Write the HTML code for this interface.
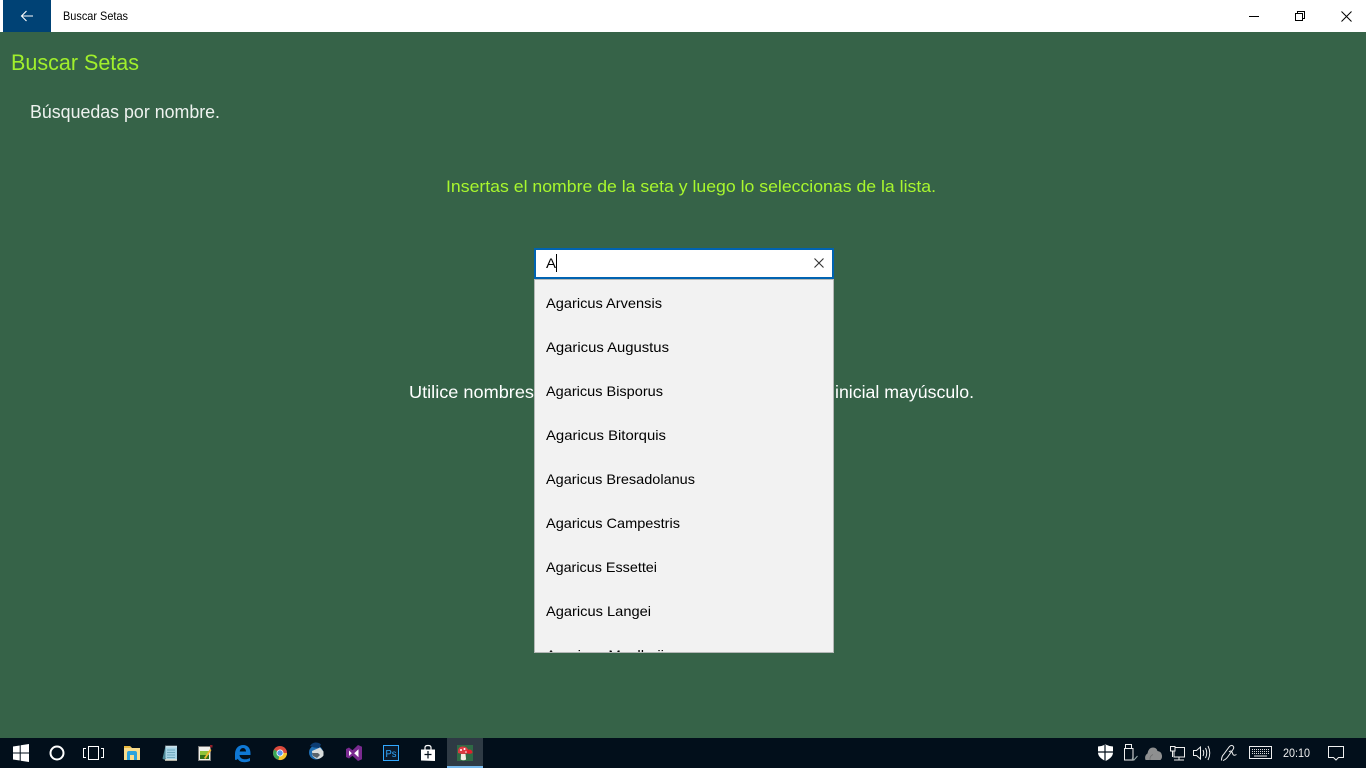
<!DOCTYPE html>
<html lang="es"><head><meta charset="utf-8"><title>Buscar Setas</title>
<style>html,body{margin:0;padding:0;background:#366348;overflow:hidden}svg{display:block}text{font-family:"Liberation Sans",sans-serif}</style></head>
<body>
<svg xmlns="http://www.w3.org/2000/svg" width="1366" height="768" viewBox="0 0 1366 768">
<rect width="1366" height="768" fill="#366348"/>
<!-- title bar -->
<rect width="1366" height="32" fill="#fff"/>
<rect x="3" width="48" height="32" fill="#004275"/>
<path d="M21.500 16H33M26.500 11L21.500 16L26.500 21" fill="none" stroke="#fff" stroke-width="1.100"/>
<text x="63" y="20" font-size="12" textLength="65" lengthAdjust="spacingAndGlyphs" fill="#000">Buscar Setas</text>
<path d="M1249 16.500H1259" stroke="#000" stroke-width="1"/>
<path d="M1295.500 13.500h7v7h-7zM1297.500 13.500v-2h7v7h-2" fill="none" stroke="#000" stroke-width="1"/>
<path d="M1341.500 11.500l10 10M1351.500 11.500l-10 10" stroke="#000" stroke-width="1"/>
<!-- content -->
<text x="11" y="70" font-size="22" textLength="128" lengthAdjust="spacingAndGlyphs" fill="#a0ef2c">Buscar Setas</text>
<text x="30" y="118" font-size="18" textLength="190" lengthAdjust="spacingAndGlyphs" fill="#eef2ef">Búsquedas por nombre.</text>
<text x="446" y="192" font-size="16.500" textLength="490" lengthAdjust="spacingAndGlyphs" fill="#a8f72e">Insertas el nombre de la seta y luego lo seleccionas de la lista.</text>
<text x="409" y="398" font-size="17.500" textLength="125" lengthAdjust="spacingAndGlyphs" fill="#fff">Utilice nombres</text>
<text x="835" y="398" font-size="17.500" textLength="139" lengthAdjust="spacingAndGlyphs" fill="#fff">inicial mayúsculo.</text>
<!-- search box -->
<rect x="535" y="249" width="298" height="29" fill="#fff" stroke="#0063b1" stroke-width="2"/>
<text x="546" y="268" font-size="14" textLength="10" lengthAdjust="spacingAndGlyphs" fill="#000">A</text>
<path d="M556.500 254V272" stroke="#000" stroke-width="1"/>
<path d="M814.500 258.500l9 9M823.500 258.500l-9 9" stroke="#333" stroke-width="1.100"/>
<!-- popup -->
<defs><clipPath id="pop"><rect x="535" y="280" width="298" height="372"/></clipPath></defs>
<rect x="534.500" y="279.500" width="299" height="373" fill="#f2f2f2" stroke="#b4b8b6" stroke-width="1"/>
<g clip-path="url(#pop)" font-size="14" fill="#000">
<text x="546" y="308" textLength="116" lengthAdjust="spacingAndGlyphs">Agaricus Arvensis</text>
<text x="546" y="352" textLength="123" lengthAdjust="spacingAndGlyphs">Agaricus Augustus</text>
<text x="546" y="396" textLength="117" lengthAdjust="spacingAndGlyphs">Agaricus Bisporus</text>
<text x="546" y="440" textLength="120" lengthAdjust="spacingAndGlyphs">Agaricus Bitorquis</text>
<text x="546" y="484" textLength="149" lengthAdjust="spacingAndGlyphs">Agaricus Bresadolanus</text>
<text x="546" y="528" textLength="134" lengthAdjust="spacingAndGlyphs">Agaricus Campestris</text>
<text x="546" y="572" textLength="111" lengthAdjust="spacingAndGlyphs">Agaricus Essettei</text>
<text x="546" y="616" textLength="105" lengthAdjust="spacingAndGlyphs">Agaricus Langei</text>
<text x="546" y="660" textLength="118" lengthAdjust="spacingAndGlyphs">Agaricus Moellerii</text>
</g>
<!-- taskbar -->
<rect y="738" width="1366" height="30" fill="#020f1b"/>
<rect x="447" y="738" width="36" height="30" fill="#2e3a44"/>
<rect x="447" y="766" width="36" height="2" fill="#76b9ed"/>
<!-- windows -->
<path d="M13 746.500l6.700-1v7H13zM20.700 745.300l8.300-1.300v8.500h-8.300zM13 753.500h6.700v7l-6.700-1zM20.700 753.500H29V762l-8.300-1.300z" fill="#fff"/>
<!-- cortana -->
<circle cx="57" cy="753" r="6.500" fill="none" stroke="#fff" stroke-width="2"/>
<!-- task view -->
<path d="M88.500 746.500h10v13h-10zM86 748.500h-2.500v9H86M101 748.500h2.500v9H101" fill="none" stroke="#fff" stroke-width="1"/>
<!-- explorer -->
<path d="M124 746h6l2 2h8v12h-16z" fill="#f9dc8c"/>
<path d="M124 746h6l1 2h-7z" fill="#e8b83f"/>
<path d="M127 757v-4q0-2 2-2h6q2 0 2 2v7h-3v-5h-4v5h-3z" fill="#2ba3dd"/>
<!-- notepad -->
<path d="M165.500 746h11.500v14h-11.500z" fill="#a6d4e6"/>
<path d="M165.500 746l-3 12.500 2 1.500 1-2z" fill="#4c8795"/>
<path d="M165 760h12" stroke="#e8e4d0" stroke-width="1.500"/>
<path d="M166 745.500v2M168 745.500v2M170 745.500v2M172 745.500v2M174 745.500v2M176 745.500v2" stroke="#eee" stroke-width="1"/>
<path d="M167 750h8M167 752.500h8M167 755h8M167 757.500h8" stroke="#6fa9bd" stroke-width="1"/>
<!-- sticky -->
<rect x="198.500" y="746.500" width="12" height="14" fill="#f0f0ec" stroke="#777"/>
<rect x="200" y="751" width="9" height="8" fill="#8fc23a"/>
<path d="M200 755h9v4h-9z" fill="#2f6e19"/>
<path d="M204 758l6-9 1.500 1-6 9z" fill="#f2b632"/>
<rect x="210" y="745" width="2.500" height="2.500" fill="#8f1d28"/>
<!-- edge -->
<path d="M235 754c0-6 4-9 8-9 5 0 7.500 3.500 7.500 8.500V755h-11c.2 3 2.800 4.300 5.500 4.300 2 0 3.800-.6 5-1.300v3c-1.500.8-3.500 1.200-5.500 1.200-3.500 0-5.700-1.400-6.800-3.500-.6 1-1.700 1.500-2.700 1zm4.700-2.500h6.300c0-2-1.200-3.500-3-3.500-1.800 0-3 1.500-3.300 3.500z" fill="#0f78d4"/>
<!-- chrome -->
<circle cx="280" cy="753" r="7" fill="#dd4a3d"/>
<path d="M280 753L274 749.500 273 753a7 7 0 0 0 5.500 6.900z" fill="#3aa757"/>
<path d="M280 753h7a7 7 0 0 1-8.500 6.900z" fill="#f6c52c"/>
<circle cx="280" cy="753" r="3.500" fill="#fff"/>
<circle cx="280" cy="753" r="2.700" fill="#5a95ec"/>
<!-- thunderbird -->
<circle cx="316" cy="752.500" r="7" fill="#1f6fb4"/>
<path d="M310 746a7 7 0 0 1 11-1.500l-2 3.500-5-.5z" fill="#0d3d73"/>
<path d="M312 751l8-3.500 3.500 4v4a7 7 0 0 1-8 3l-3-2.500z" fill="#d8dcdc"/>
<path d="M312 753h6l2 2-3 3-4-2z" fill="#5a636b"/>
<!-- VS -->
<path d="M346 749l3-1.500 3.500 2.700 5.500-5.200 4 1.800v12.400l-4 1.800-5.500-5.200-3.500 2.700-3-1.500z" fill="#7a2a90"/>
<path d="M349 750.500v5.500l2.800-2.800zM358.500 749.200l-4.300 4 4.300 4z" fill="#fff"/>
<!-- Photoshop -->
<rect x="383.500" y="745.500" width="15" height="15" fill="#0a1a2c" stroke="#31a8ff"/>
<text x="385.500" y="757" font-size="10.500" fill="#31a8ff" textLength="11" lengthAdjust="spacingAndGlyphs">Ps</text>
<!-- store -->
<path d="M421 749.500h14V761l-14-.5z" fill="#fff"/>
<path d="M425 749.500v-2q0-2 3-2t3 2v2" fill="none" stroke="#fff" stroke-width="1.200"/>
<path d="M424.500 754.500h7M428 751v7.500" stroke="#020f1b" stroke-width="1.200"/>
<!-- mushroom -->
<rect x="457" y="745" width="16" height="16" fill="#2f6a45"/>
<path d="M458 753q-.5-6.500 5-6.500t5.500 6.500q-5 2-10.500 0z" fill="#dc3a42"/>
<path d="M466 753q0-3.500 3.200-3.500t3.300 3.500q-3 1.700-6.500 0z" fill="#e0202c"/>
<path d="M461 754h4.500l.6 5.500q-2.700 1.500-5.400 0z" fill="#f3eee4"/>
<circle cx="461" cy="750" r="1" fill="#fff"/><circle cx="464.500" cy="749" r="1" fill="#fff"/><circle cx="466" cy="752" r=".8" fill="#fff"/>
<!-- shield -->
<path d="M1098 746.500q4-.3 7.500-2 3.500 1.700 7.500 2v6q0 5-7.500 8.500-7.500-3.500-7.500-8.500z" fill="#fff"/>
<path d="M1105 745v16M1098 752h15" stroke="#020f1b" stroke-width="1.200"/>
<!-- usb -->
<path d="M1125.500 744.500h6v4h-6zM1124.500 748.500h8.500v11.500h-8.500z" fill="none" stroke="#eee" stroke-width="1"/>
<path d="M1132 758l2 2 3.500-4" fill="none" stroke="#9aa" stroke-width="1"/>
<!-- cloud -->
<path d="M1145.500 760q-1.500-4.500 2-6.500 1-6 5.500-6 3.500 0 4.500 3.500 4 .5 4.500 4.500.3 3-1.500 4.500z" fill="#8e8f90"/>
<path d="M1150 760q-.5-4 3-5.500" fill="none" stroke="#6e6f70" stroke-width=".8"/>
<!-- network -->
<path d="M1170.500 746.500h4.500v4.500h-4.500zM1175 747.500h9.500v9.500H1174V751M1172.500 751v6M1179 757v2.500M1174 760h10" fill="none" stroke="#eee" stroke-width="1"/>
<!-- speaker -->
<path d="M1193.500 750.500h3l4-3.500v12l-4-3.500h-3z" fill="none" stroke="#eee" stroke-width="1"/>
<path d="M1203 750q1.500 3 0 6M1205.500 748q2.500 5 0 10M1208 746q3.500 7 0 14" fill="none" stroke="#eee" stroke-width="1"/>
<!-- pen -->
<path d="M1221.500 760.500q0-4 2-6l6-8q2-2 3.500-.5t0 3.500l-5 7q-2 3-5 4M1229 752q2-2 3 0l1 2.500q1 1.500 3.500 0" fill="none" stroke="#eee" stroke-width="1"/>
<!-- keyboard -->
<rect x="1249.500" y="746.500" width="22" height="12" fill="none" stroke="#eee"/>
<path d="M1252 749.500h17M1252 751.500h17M1252 753.500h17" stroke="#ddd" stroke-width="1" stroke-dasharray="1 1"/>
<path d="M1254 756h13" stroke="#eee" stroke-width="1"/>
<!-- clock -->
<text x="1283" y="757" font-size="12" textLength="27" lengthAdjust="spacingAndGlyphs" fill="#f0f0f0">20:10</text>
<!-- notification -->
<path d="M1328.500 746.500h15v11h-5l-2.500 2.500-2.500-2.500h-5z" fill="none" stroke="#f0f0f0" stroke-width="1"/>
</svg>
</body></html>
